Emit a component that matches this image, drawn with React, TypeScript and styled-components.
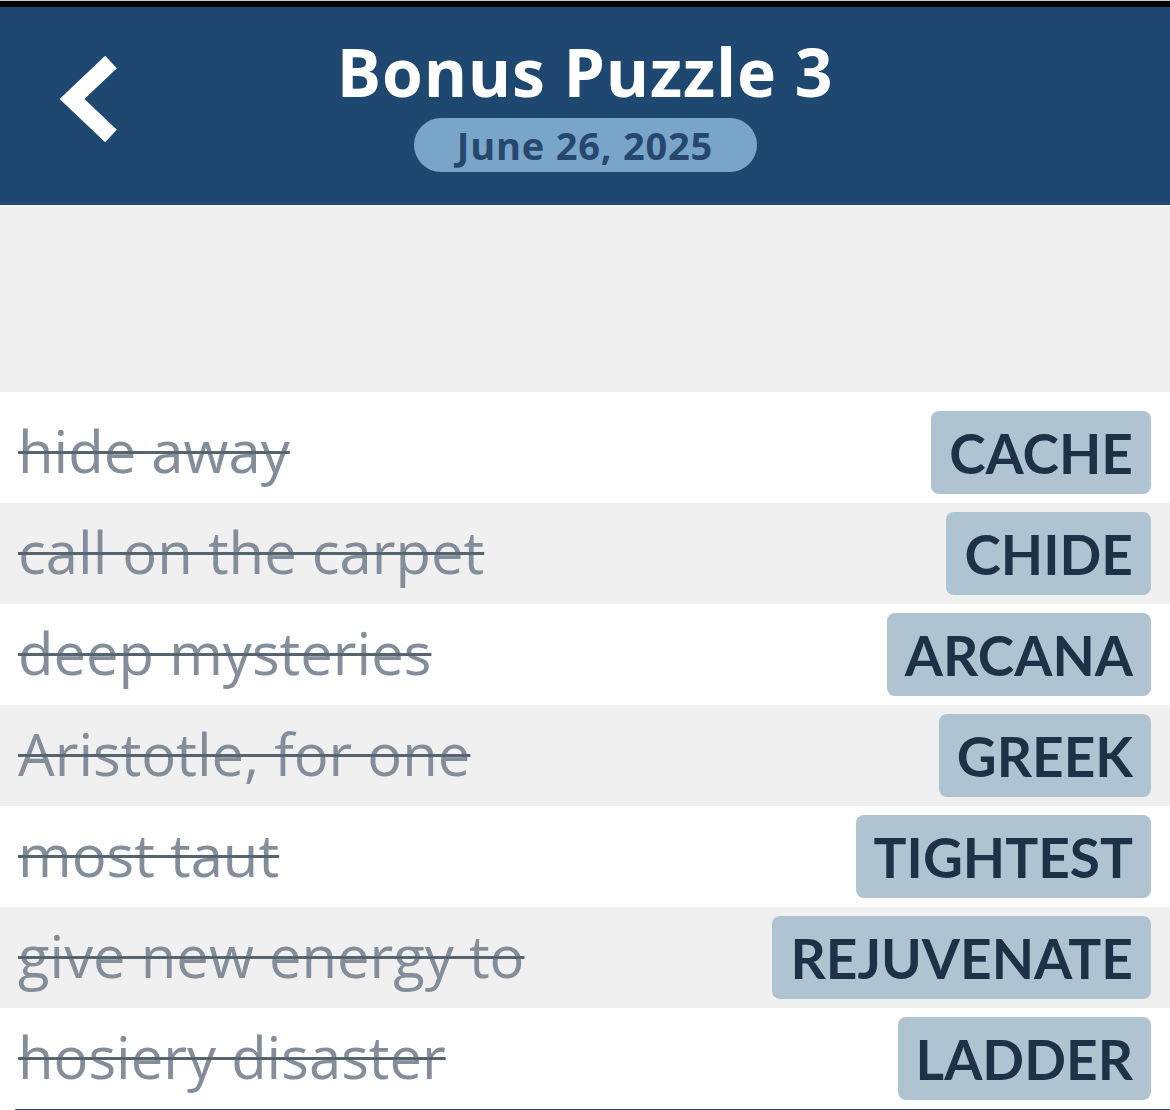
import React from "react";
import styled, { createGlobalStyle } from "styled-components";

const GlobalStyle = createGlobalStyle`
  html, body {
    margin: 0;
    padding: 0;
    background: #ffffff;
    font-family: "Open Sans", Lato, "Liberation Sans", sans-serif;
  }
`;

type Clue = { clue: string; answer: string };

const clues: Clue[] = [
  { clue: "hide away", answer: "CACHE" },
  { clue: "call on the carpet", answer: "CHIDE" },
  { clue: "deep mysteries", answer: "ARCANA" },
  { clue: "Aristotle, for one", answer: "GREEK" },
  { clue: "most taut", answer: "TIGHTEST" },
  { clue: "give new energy to", answer: "REJUVENATE" },
  { clue: "hosiery disaster", answer: "LADDER" },
];

const App: React.FC = () => {
  return (
    <Page>
      <GlobalStyle />
      <StatusStrip />
      <Header>
        <BackButton aria-label="Back">
          <svg width="60" height="90" viewBox="0 0 60 90">
            <path
              d="M53 8 L14 45 L53 82"
              fill="none"
              stroke="#ffffff"
              strokeWidth="17"
              strokeLinecap="butt"
              strokeLinejoin="miter"
            />
          </svg>
        </BackButton>
        <TitleBlock>
          <Title>Bonus Puzzle 3</Title>
          <DatePill>June 26, 2025</DatePill>
        </TitleBlock>
        <div />
      </Header>
      <GridArea />
      <ClueList>
        {clues.map((c, i) => (
          <ClueRow key={c.answer} $striped={i % 2 === 1}>
            <ClueText>{c.clue}</ClueText>
            <Answer>{c.answer}</Answer>
          </ClueRow>
        ))}
      </ClueList>
      <BottomBar />
    </Page>
  );
};

const Page = styled.div`
  width: 1170px;
  height: 1110px;
  overflow: hidden;
  display: flex;
  flex-direction: column;
  background: #ffffff;
`;

const StatusStrip = styled.div`
  height: 6px;
  flex-shrink: 0;
  background: #000000;
  border-top: 1px solid #c8c8c8;
`;

const Header = styled.header`
  height: 198px;
  flex-shrink: 0;
  background: #1f4870;
  display: grid;
  grid-template-columns: 1fr auto 1fr;
  align-items: start;
`;

const BackButton = styled.div`
  padding: 47px 0 0 58px;
  cursor: pointer;
`;

const TitleBlock = styled.div`
  display: flex;
  flex-direction: column;
  align-items: center;
  padding-top: 22px;
`;

const Title = styled.h1`
  margin: 0;
  color: #ffffff;
  font-size: 66px;
  font-weight: 700;
  line-height: 84px;
  letter-spacing: 0.8px;
`;

const DatePill = styled.div`
  margin-top: 5px;
  width: 343px;
  height: 54px;
  border-radius: 27px;
  background: #79a5c8;
  color: #26486e;
  font-size: 38px;
  font-weight: 700;
  letter-spacing: 0.8px;
  display: flex;
  align-items: center;
  justify-content: center;
`;

const GridArea = styled.div`
  height: 187px;
  flex-shrink: 0;
  background: #f0f0f0;
`;

const ClueList = styled.div`
  flex: 1;
  padding-top: 10px;
  background: #ffffff;
  display: flex;
  flex-direction: column;
`;

const ClueRow = styled.div<{ $striped: boolean }>`
  height: 101px;
  flex-shrink: 0;
  display: flex;
  align-items: center;
  justify-content: space-between;
  padding: 0 19px 0 18px;
  box-sizing: border-box;
  background: ${(p) => (p.$striped ? "#f0f0f0" : "#ffffff")};
`;

const ClueText = styled.span`
  font-size: 58px;
  line-height: 58px;
  color: #838e9a;
  text-decoration: line-through;
  text-decoration-color: #56646f;
  text-decoration-thickness: 3px;
  padding-bottom: 4px;
`;

const Answer = styled.span`
  height: 83px;
  padding: 0 18px;
  border-radius: 8px;
  background: #b0c3d1;
  color: #1d3247;
  font-family: Lato, "Open Sans", sans-serif;
  font-size: 55px;
  font-weight: 700;
  display: flex;
  align-items: center;
`;

const BottomBar = styled.div`
  height: 3px;
  margin-left: 15px;
  background: #1f4870;
  border-top-left-radius: 3px;
`;

export default App;
